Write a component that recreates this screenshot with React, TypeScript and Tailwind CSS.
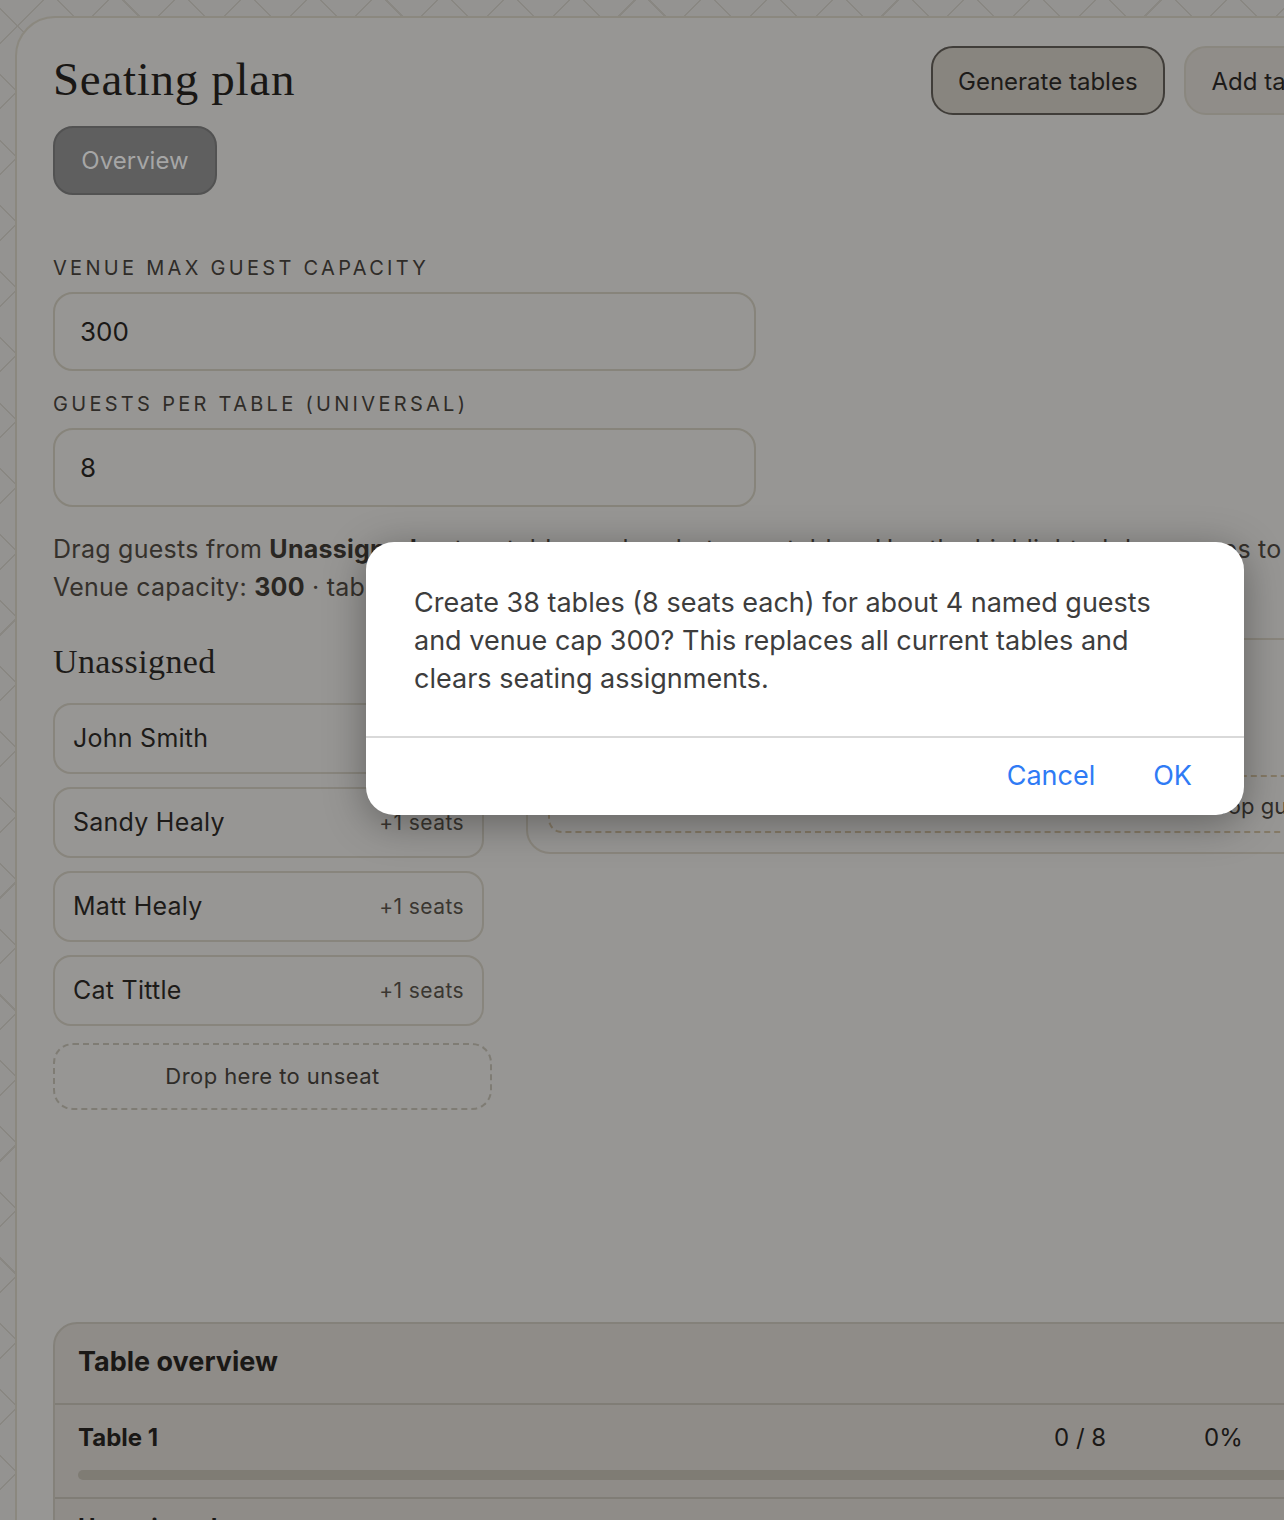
import React from "react";

interface Guest {
  name: string;
  plus: number;
}

const guests: Guest[] = [
  { name: "John Smith", plus: 0 },
  { name: "Sandy Healy", plus: 1 },
  { name: "Matt Healy", plus: 1 },
  { name: "Cat Tittle", plus: 1 },
];

const GuestCard: React.FC<Guest> = ({ name, plus }) => {
  return (
    <div className="flex h-[71px] w-[431px] items-center justify-between rounded-[18px] border-2 border-[#88857d] px-[18px]">
      <span className="text-[25px] tracking-[0.01em] text-[#1d1b19]">{name}</span>
      {plus > 0 && (
        <span className="text-[21px] tracking-[0.02em] text-[#3a3631]">+{plus} seats</span>
      )}
    </div>
  );
};

const Field: React.FC<{ label: string; value: string; first?: boolean }> = ({
  label,
  value,
  first,
}) => {
  return (
    <div className={first ? "mt-[59px]" : "mt-[19px]"}>
      <div className="text-[20px] leading-[28px] tracking-[0.165em] text-[#2f2c28]">{label}</div>
      <div className="mt-[10px] flex h-[79px] w-[703px] items-center rounded-[20px] border-2 border-[#87847b] px-[25px] text-[26px] text-[#1a1816]">
        {value}
      </div>
    </div>
  );
};

export default function App() {
  return (
    <div className="relative h-[1520px] w-[1284px] overflow-hidden bg-[#949391] bg-[image:repeating-linear-gradient(45deg,transparent_0_45px,#898782_45px_46.5px),repeating-linear-gradient(-45deg,transparent_0_45px,#898782_45px_46.5px)] font-['Inter',sans-serif]">
      <div className="ml-[15px] mt-[16px] w-[1520px] rounded-tl-[40px] border-2 border-[#8b887f] bg-[#979694] px-[36px] pt-[28px] pb-[200px]">
        {/* header */}
        <div className="flex items-start">
          <div className="w-[878px] shrink-0">
            <h1 className="mt-[6px] font-['Liberation_Serif',serif] text-[47px] leading-[54px] tracking-[0.015em] text-[#191715]">
              Seating plan
            </h1>
            <button className="mt-[20px] h-[69px] w-[164px] rounded-[20px] border-2 border-[#525252] bg-[#5f5f5f] text-[24px] text-[#a6a6a6]">
              Overview
            </button>
          </div>
          <div className="flex gap-[19px]">
            <button className="h-[69px] rounded-[22px] border-2 border-[#403d39] bg-[#88857f] px-[25px] pt-[2px] text-[24px] text-[#1d1b19]">
              Generate tables
            </button>
            <button className="h-[69px] rounded-[22px] border-2 border-[#8a877f] bg-[#908d89] px-[26px] pt-[2px] text-[24px] text-[#1d1b19]">
              Add table
            </button>
          </div>
        </div>

        <Field label="VENUE MAX GUEST CAPACITY" value="300" first />
        <Field label="GUESTS PER TABLE (UNIVERSAL)" value="8" />

        <p className="mt-[23px] whitespace-nowrap text-[25px] leading-[38px] tracking-[0.01em] text-[#35312c]">
          Drag guests from <b className="text-[#2a2723]">Unassigned</b> onto a table, or drag between tables. Use the highlighted drop zones to move to
          <br />
          Venue capacity: <b className="text-[#2a2723]">300</b> · tables: 1 · seats: 8
        </p>

        {/* columns */}
        <div className="mt-[32px] flex items-start gap-[34px]">
          <div className="w-[439px] shrink-0 pt-[4px]">
            <h2 className="font-['Liberation_Serif',serif] text-[34px] leading-[40px] tracking-[0.012em] text-[#1d1b19]">
              Unassigned
            </h2>
            <div className="mt-[21px] flex flex-col gap-[13px]">
              {guests.map((g) => (
                <GuestCard key={g.name} {...g} />
              ))}
            </div>
            <div className="mt-[17px] flex h-[67px] w-[439px] items-center justify-center rounded-[20px] border-2 border-dashed border-[#7f7c74] text-[22px] tracking-[0.02em] text-[#2f2c28]">
              Drop here to unseat
            </div>
          </div>

          <div className="h-[216px] w-[860px] rounded-[24px] border-2 border-[#8a867d] px-[20px] pt-[20px]">
            <div className="flex h-[60px] items-center">
              <span className="font-['Liberation_Serif',serif] text-[28px] text-[#1d1b19]">Table 1</span>
            </div>
            <div className="mt-[55px] flex h-[58px] items-center rounded-[14px] border-2 border-dashed border-[#857a66] pl-[654px] pt-[4px] text-[22px] text-[#2f2c28]">
              <span className="whitespace-nowrap">Drop guests here</span>
            </div>
          </div>
        </div>

        {/* table overview */}
        <div className="mt-[212px] w-[1400px] rounded-tl-[24px] border-2 border-[#84817a] bg-[#8f8c88]">
          <div className="flex h-[79px] items-center px-[23px] pb-[2px] text-[27px] font-bold text-[#1a1816]">
            Table overview
          </div>
          <div className="border-t-2 border-[#807d76] px-[23px] pt-[18px] pb-[17px]">
            <div className="flex text-[24px] leading-[30px] text-[#1a1816]">
              <span className="w-[976px] shrink-0 font-bold">Table 1</span>
              <span className="w-[150px] shrink-0">0 / 8</span>
              <span>0%</span>
            </div>
            <div className="mt-[17px] h-[10px] rounded-full bg-[#7f7c74]" />
          </div>
          <div className="border-t-2 border-[#807d76] px-[23px] pt-[14px] pb-[17px]">
            <div className="text-[24px] font-bold leading-[30px] text-[#1a1816]">Unassigned guests</div>
          </div>
        </div>
      </div>

      {/* confirm dialog */}
      <div className="absolute left-[366px] top-[542px] w-[878px] overflow-hidden rounded-[28px] bg-white shadow-[0_8px_40px_rgba(0,0,0,0.35)]">
        <div className="whitespace-nowrap px-[48px] pt-[42px] pb-[38px] text-[27px] leading-[38px] text-[#3d3d3d]">
          Create 38 tables (8 seats each) for about 4 named guests
          <br />
          and venue cap 300? This replaces all current tables and
          <br />
          clears seating assignments.
        </div>
        <div className="h-[2px] bg-[#d9d9d9]" />
        <div className="flex h-[77px] items-center justify-end gap-[58px] pr-[52px] text-[27px] text-[#2f7bf5]">
          <span>Cancel</span>
          <span>OK</span>
        </div>
      </div>
    </div>
  );
}
